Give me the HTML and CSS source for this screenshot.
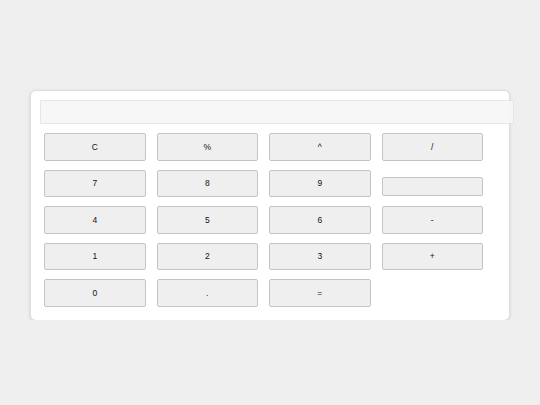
FILE: index.html
```html
<!DOCTYPE html>
<html lang="en">
<head>
<meta charset="utf-8">
<title>Calculator</title>
<link rel="stylesheet" href="styles.css">
</head>
<body>
<div class="calc">
  <div class="display"></div>
  <div class="keys">
    <button class="key">C</button>
    <button class="key">%</button>
    <button class="key">^</button>
    <button class="key">/</button>
    <button class="key">7</button>
    <button class="key">8</button>
    <button class="key">9</button>
    <button class="key key-empty"></button>
    <button class="key">4</button>
    <button class="key">5</button>
    <button class="key">6</button>
    <button class="key">-</button>
    <button class="key">1</button>
    <button class="key">2</button>
    <button class="key">3</button>
    <button class="key">+</button>
    <button class="key">0</button>
    <button class="key">.</button>
    <button class="key">=</button>
  </div>
</div>
</body>
</html>
```

FILE: styles.css
```css
html, body {
  margin: 0;
  padding: 0;
  background: #efefef;
  font-family: "Liberation Sans", Arial, sans-serif;
}
body {
  display: flex;
  justify-content: center;
  padding-top: 91px;
}
.calc {
  box-sizing: border-box;
  width: 478px;
  background: #ffffff;
  border-radius: 5px;
  box-shadow: 0 0 0 1px #dedede, 0 1px 4px rgba(0, 0, 0, 0.2);
  padding: 9px 9px 13px 9px;
}
.display {
  box-sizing: border-box;
  width: 474px;
  height: 24px;
  background: rgba(246, 246, 246, 0.92);
  border: 1px solid #e6e6e6;
  position: relative;
}
.keys {
  margin: 9px 17px 0 4px;
  display: grid;
  grid-template-columns: repeat(4, 1fr);
  grid-auto-rows: 27.5px;
  column-gap: 11px;
  row-gap: 9px;
}
.key {
  box-sizing: border-box;
  margin: 0;
  padding: 0;
  background: #efefef;
  border: 1px solid #c4c4c4;
  border-radius: 2px;
  font-family: "Liberation Sans", Arial, sans-serif;
  font-size: 8.5px;
  color: #111111;
}
.key-empty {
  height: 19px;
  align-self: end;
  margin-bottom: 1px;
}
```
